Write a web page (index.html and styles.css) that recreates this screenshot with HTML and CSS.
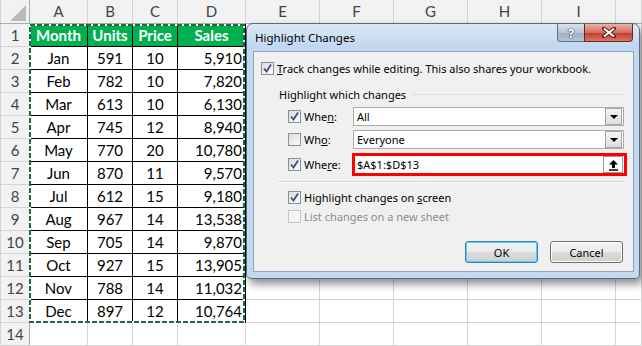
FILE: index.html
```html
<!DOCTYPE html>
<html lang="en">
<head>
  <meta charset="UTF-8" />
  <title>Highlight Changes</title>
  <link rel="stylesheet" href="styles.css">
</head>
<body>
<div class="app">
  <table class="sheet">
    <colgroup>
      <col class="w-rh"><col class="w-a"><col class="w-b"><col class="w-c"><col class="w-d">
      <col class="w-e" span="5"><col>
    </colgroup>
    <tr class="colheads">
      <th class="corner"><svg width="16" height="16" viewBox="0 0 16 16"><path d="M16 0 V16 H0 Z" fill="#b9b9b9"/></svg></th>
      <th>A</th><th>B</th><th>C</th><th>D</th><th>E</th><th>F</th><th>G</th><th>H</th><th>I</th><th></th>
    </tr>
    <tr><th>1</th><td class="hd">Month</td><td class="hd">Units</td><td class="hd">Price</td><td class="hd">Sales</td><td></td><td></td><td></td><td></td><td></td><td></td></tr>
    <tr><th>2</th><td class="d c">Jan</td><td class="d c">591</td><td class="d c">10</td><td class="d r">5,910</td><td></td><td></td><td></td><td></td><td></td><td></td></tr>
    <tr><th>3</th><td class="d c">Feb</td><td class="d c">782</td><td class="d c">10</td><td class="d r">7,820</td><td></td><td></td><td></td><td></td><td></td><td></td></tr>
    <tr><th>4</th><td class="d c">Mar</td><td class="d c">613</td><td class="d c">10</td><td class="d r">6,130</td><td></td><td></td><td></td><td></td><td></td><td></td></tr>
    <tr><th>5</th><td class="d c">Apr</td><td class="d c">745</td><td class="d c">12</td><td class="d r">8,940</td><td></td><td></td><td></td><td></td><td></td><td></td></tr>
    <tr><th>6</th><td class="d c">May</td><td class="d c">770</td><td class="d c">20</td><td class="d r">10,780</td><td></td><td></td><td></td><td></td><td></td><td></td></tr>
    <tr><th>7</th><td class="d c">Jun</td><td class="d c">870</td><td class="d c">11</td><td class="d r">9,570</td><td></td><td></td><td></td><td></td><td></td><td></td></tr>
    <tr><th>8</th><td class="d c">Jul</td><td class="d c">612</td><td class="d c">15</td><td class="d r">9,180</td><td></td><td></td><td></td><td></td><td></td><td></td></tr>
    <tr><th>9</th><td class="d c">Aug</td><td class="d c">967</td><td class="d c">14</td><td class="d r">13,538</td><td></td><td></td><td></td><td></td><td></td><td></td></tr>
    <tr><th>10</th><td class="d c">Sep</td><td class="d c">705</td><td class="d c">14</td><td class="d r">9,870</td><td></td><td></td><td></td><td></td><td></td><td></td></tr>
    <tr><th>11</th><td class="d c">Oct</td><td class="d c">927</td><td class="d c">15</td><td class="d r">13,905</td><td></td><td></td><td></td><td></td><td></td><td></td></tr>
    <tr><th>12</th><td class="d c">Nov</td><td class="d c">788</td><td class="d c">14</td><td class="d r">11,032</td><td></td><td></td><td></td><td></td><td></td><td></td></tr>
    <tr><th>13</th><td class="d c">Dec</td><td class="d c">897</td><td class="d c">12</td><td class="d r">10,764</td><td></td><td></td><td></td><td></td><td></td><td></td></tr>
    <tr><th>14</th><td></td><td></td><td></td><td></td><td></td><td></td><td></td><td></td><td></td><td></td></tr>
  </table>

  <!-- copy marquee around A1:D13 -->
  <svg class="ants" width="216" height="299" viewBox="0 0 216 299">
    <rect x="1" y="1" width="214" height="297" fill="none" stroke="#fff" stroke-width="2"/>
    <rect x="1" y="1" width="214" height="297" fill="none" stroke="#1d6b3c" stroke-width="2" stroke-dasharray="5 2"/>
  </svg>

  <div class="dialog">
    <div class="titlebar">
      <span class="title">Highlight Changes</span>
      <div class="capbtns">
        <span class="cap help">?</span>
        <span class="cap close">
          <svg width="14" height="11" viewBox="0 0 14 11">
            <path d="M2 1.5 L12 9.5 M12 1.5 L2 9.5" stroke="#5b2219" stroke-width="4" stroke-linecap="square"/>
            <path d="M2 1.5 L12 9.5 M12 1.5 L2 9.5" stroke="#fff" stroke-width="2.2"/>
          </svg>
        </span>
      </div>
    </div>

    <div class="panel">
      <div class="chk-row track">
        <span class="box on"><svg width="11" height="11" viewBox="0 0 11 11"><path d="M2 5.5 L4.5 8.5 L9 1.5" fill="none" stroke="#3b4f7c" stroke-width="1.8"/></svg></span>
        <span><u>T</u>rack changes while editing. This also shares your workbook.</span>
      </div>

      <div class="group-head">
        <span>Highlight which changes</span>
        <span class="rule"></span>
      </div>

      <div class="field when">
        <div class="chk-row">
          <span class="box on"><svg width="11" height="11" viewBox="0 0 11 11"><path d="M2 5.5 L4.5 8.5 L9 1.5" fill="none" stroke="#3b4f7c" stroke-width="1.8"/></svg></span>
          <span>Whe<u>n</u>:</span>
        </div>
        <div class="combo"><span class="val">All</span><span class="arrow"></span></div>
      </div>

      <div class="field who">
        <div class="chk-row">
          <span class="box"></span>
          <span>Wh<u>o</u>:</span>
        </div>
        <div class="combo"><span class="val">Everyone</span><span class="arrow"></span></div>
      </div>

      <div class="field where">
        <div class="chk-row">
          <span class="box on"><svg width="11" height="11" viewBox="0 0 11 11"><path d="M2 5.5 L4.5 8.5 L9 1.5" fill="none" stroke="#3b4f7c" stroke-width="1.8"/></svg></span>
          <span>Whe<u>r</u>e:</span>
        </div>
        <div class="refbox">
          <span class="val">$A$1:$D$13</span>
          <span class="collapse">
            <svg width="11" height="12" viewBox="0 0 11 12"><path d="M5.5 1 L10 5.5 H7 V9 H4 V5.5 H1 Z" fill="#000"/><path d="M1 11 H10" stroke="#000" stroke-width="1.5"/></svg>
          </span>
        </div>
      </div>

      <div class="sep"></div>

      <div class="chk-row sub screen">
        <span class="box on"><svg width="11" height="11" viewBox="0 0 11 11"><path d="M2 5.5 L4.5 8.5 L9 1.5" fill="none" stroke="#3b4f7c" stroke-width="1.8"/></svg></span>
        <span>Highlight changes on <u>s</u>creen</span>
      </div>
      <div class="chk-row sub list disabled">
        <span class="box"></span>
        <span>List changes on a new sheet</span>
      </div>

      <div class="buttons">
        <button class="btn default">OK</button>
        <button class="btn">Cancel</button>
      </div>
    </div>
  </div>
</div>
</body>
</html>
```

FILE: styles.css
```css
body {
  margin: 0;
  background: #fff;
  font-family: Lato, "Liberation Sans", sans-serif;
}

.app {
  position: relative;
  width: 642px;
  height: 346px;
  overflow: hidden;
}

/* spreadsheet */
.sheet {
  border-collapse: collapse;
  table-layout: fixed;
  width: 642px;
  font-size: 15px;
  color: #000;
}

.w-rh { width: 29px; }
.w-a { width: 58px; }
.w-b { width: 45px; }
.w-c { width: 45px; }
.w-d { width: 68px; }
.w-e { width: 74px; }

.sheet tr {
  height: 23px;
}

.sheet td,
.sheet th {
  padding: 0 3px;
  border: 1px solid #d4d4d4;
  white-space: nowrap;
  overflow: hidden;
}

.sheet th {
  background: #f2f2f2;
  color: #444;
  font-weight: normal;
  text-align: center;
  border-right-color: #ababab;
}

.colheads th {
  border-right-color: #d4d4d4;
  border-bottom-color: #ababab;
  border-top: none;
}

.colheads th.corner {
  padding: 0 3px 2px 0;
  text-align: right;
  vertical-align: bottom;
  line-height: 0;
  border-right-color: #ababab;
}

.sheet td.hd {
  background: #00b050;
  color: #fff;
  font-weight: bold;
  text-align: center;
  border: 1px solid #000;
}

.sheet td.d {
  border: 1px solid #000;
}

.c { text-align: center; }
.r { text-align: right; padding-right: 9px; }

.ants {
  position: absolute;
  left: 29px;
  top: 24px;
}

/* dialog */
.dialog {
  position: absolute;
  left: 246px;
  top: 23px;
  width: 394px;
  height: 256px;
  box-sizing: border-box;
  border: 1px solid #58697f;
  border-radius: 7px 7px 5px 5px;
  background: linear-gradient(#dbe8f6, #c2d8f0 22px, #c4d9f1);
  box-shadow: 3px 5px 8px rgba(0, 0, 0, 0.45);
  padding: 0 5px 6px 6px;
  display: flex;
  flex-direction: column;
  font-family: "Noto Sans", "Open Sans", sans-serif;
  font-size: 11px;
  color: #000;
}

.titlebar {
  height: 27px;
  display: flex;
  align-items: flex-start;
  justify-content: space-between;
}

.title {
  margin: 6px 0 0 2px;
  font-size: 11.5px;
}

.capbtns {
  display: flex;
  margin-right: 1px;
}

.cap {
  height: 17px;
  display: flex;
  align-items: center;
  justify-content: center;
  border: 1px solid #5f6f84;
  border-top: none;
}

.help {
  width: 26px;
  border-right: none;
  border-radius: 0 0 0 4px;
  background: linear-gradient(#d9e1eb, #b9c6d6 50%, #9fb0c5 51%, #b3c2d4);
  color: #fff;
  font-weight: bold;
  font-size: 13px;
  text-shadow: 0 0 1px #333, 0 0 1px #333, 0 0 1px #333;
}

.close {
  width: 47px;
  border-color: #6a261d;
  border-radius: 0 0 4px 0;
  background: linear-gradient(#eab1a8, #d66c5f 50%, #c43a2b 51%, #d6776c);
}

.panel {
  flex: 1;
  background: #f0f0f0;
  border: 1px solid #8fa5c0;
  display: flex;
  flex-direction: column;
}

.chk-row {
  display: flex;
  align-items: center;
  gap: 3px;
  height: 14px;
}

.box {
  width: 11px;
  height: 11px;
  border: 1px solid #8e8f8f;
  background: linear-gradient(135deg, #dcdcdc, #fbfbfb);
  display: flex;
  align-items: center;
  justify-content: center;
  flex-shrink: 0;
}

.track {
  margin: 9px 0 0 7px;
}

.group-head {
  display: flex;
  align-items: center;
  gap: 6px;
  height: 14px;
  margin: 12px 8px 0 25px;
}

.group-head .rule {
  flex: 1;
  height: 1px;
  background: #d5dfe5;
}

.field {
  display: flex;
  align-items: center;
  margin-left: 34px;
  margin-right: 9px;
}

.field .chk-row {
  width: 65px;
}

.when { margin-top: 6px; }
.who { margin-top: 4px; }
.where { margin-top: 4px; }

.combo {
  flex: 1;
  height: 17px;
  border: 1px solid #abadb3;
  background: #fff;
  display: flex;
  align-items: center;
}

.val {
  flex: 1;
  padding-left: 3px;
}

.arrow {
  width: 15px;
  height: 15px;
  margin-right: 1px;
  border: 1px solid #a5a5a5;
  background: linear-gradient(#f6f6f6, #dedede);
  display: flex;
  align-items: center;
  justify-content: center;
}

.arrow::after {
  content: "";
  border-left: 4px solid transparent;
  border-right: 4px solid transparent;
  border-top: 4px solid #000;
  margin-top: 1px;
}

.refbox {
  flex: 1;
  height: 17px;
  margin: 0 -3px 0 -1px;
  border: 3px solid #f00;
  background: #fff;
  display: flex;
  align-items: center;
}

.refbox .val {
  padding-left: 2px;
}

.collapse {
  width: 18px;
  height: 15px;
  margin-right: 1px;
  border: 1px solid #9b9b9b;
  background: #fff;
  display: flex;
  align-items: center;
  justify-content: center;
}

.sep {
  height: 1px;
  background: #d5d5d5;
  border-bottom: 1px solid #fff;
  margin: 5px 8px 0 24px;
}

.sub {
  margin-left: 34px;
}

.screen { margin-top: 7px; }
.list { margin-top: 5px; }

.disabled {
  color: #8d8d8d;
}

.disabled .box {
  border-color: #c6c6c6;
  background: #f4f4f4;
}

.buttons {
  display: flex;
  justify-content: flex-end;
  gap: 12px;
  margin: 18px 10px 0 0;
}

.btn {
  width: 73px;
  height: 22px;
  font-family: inherit;
  font-size: 11px;
  color: #000;
  border: 1px solid #707070;
  border-radius: 3px;
  background: linear-gradient(#f2f2f2, #ebebeb 50%, #dddddd 51%, #cfcfcf);
  box-shadow: inset 0 0 0 1px #fcfcfc;
  padding: 0;
}

.btn.default {
  border-color: #3c7fb1;
  box-shadow: inset 0 0 0 1px #48d2fc;
}
```
